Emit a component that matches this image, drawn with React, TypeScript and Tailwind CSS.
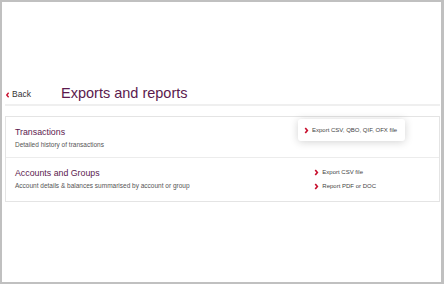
import React from "react";

function Chevron({ className = "" }: { className?: string }) {
  return (
    <svg viewBox="0 0 6 8" className={className} fill="none">
      <path d="M1.5 1l2.5 3-2.5 3" stroke="#c8102e" strokeWidth="2" />
    </svg>
  );
}

function ExportLink({ label }: { label: string }) {
  return (
    <div className="flex items-center gap-[3px] text-[6px] text-[#444] whitespace-nowrap">
      <Chevron className="w-[5px] h-[7px] shrink-0" />
      <span>{label}</span>
    </div>
  );
}

export default function App() {
  return (
    <div className="w-[444px] h-[284px] bg-white border-2 border-r-[3px] border-[#c0c0c0] font-['Liberation_Sans',Arial,sans-serif] overflow-hidden">
      <div className="pt-[81px] pl-[3px] pr-[1px]">
        <div className="flex items-end h-[18px]">
          <a href="#" className="w-[56px] flex items-center gap-[2px] text-[8.5px] text-[#333]">
            <svg viewBox="0 0 6 8" className="w-[5px] h-[6px]" fill="none">
              <path d="M4.5 1L2 4l2.5 3" stroke="#c8102e" strokeWidth="1.8" />
            </svg>
            Back
          </a>
          <h1 className="text-[14.5px] leading-none text-[#5b1a4e] pb-[1px]">Exports and reports</h1>
        </div>
        <div className="mt-[3px] h-[2px] bg-[#efefef]" />

        <div className="mt-[10px] border border-[#e4e4e4]">
          <div className="h-[41px] flex justify-between items-start border-b border-[#ececec]">
            <div className="pl-[9px] pt-[9px]">
              <div className="text-[8.8px] text-[#5b1a4e] leading-[12px]">Transactions</div>
              <div className="text-[6.5px] text-[#555] mt-[2px]">Detailed history of transactions</div>
            </div>
            <div className="mt-[2px] mr-[34px] w-[107px] h-[22px] rounded-[3px] bg-white shadow-[0_1px_8px_rgba(0,0,0,0.18)] flex items-center pl-[6px]">
              <ExportLink label="Export CSV, QBO, QIF, OFX file" />
            </div>
          </div>
          <div className="h-[43px] flex justify-between items-start">
            <div className="pl-[9px] pt-[9px]">
              <div className="text-[8.8px] text-[#5b1a4e] leading-[12px]">Accounts and Groups</div>
              <div className="text-[6.5px] text-[#555] mt-[2px]">Account details &amp; balances summarised by account or group</div>
            </div>
            <div className="pt-[10px] mr-[63px] flex flex-col gap-[5px]">
              <ExportLink label="Export CSV file" />
              <ExportLink label="Report PDF or DOC" />
            </div>
          </div>
        </div>
      </div>
    </div>
  );
}
